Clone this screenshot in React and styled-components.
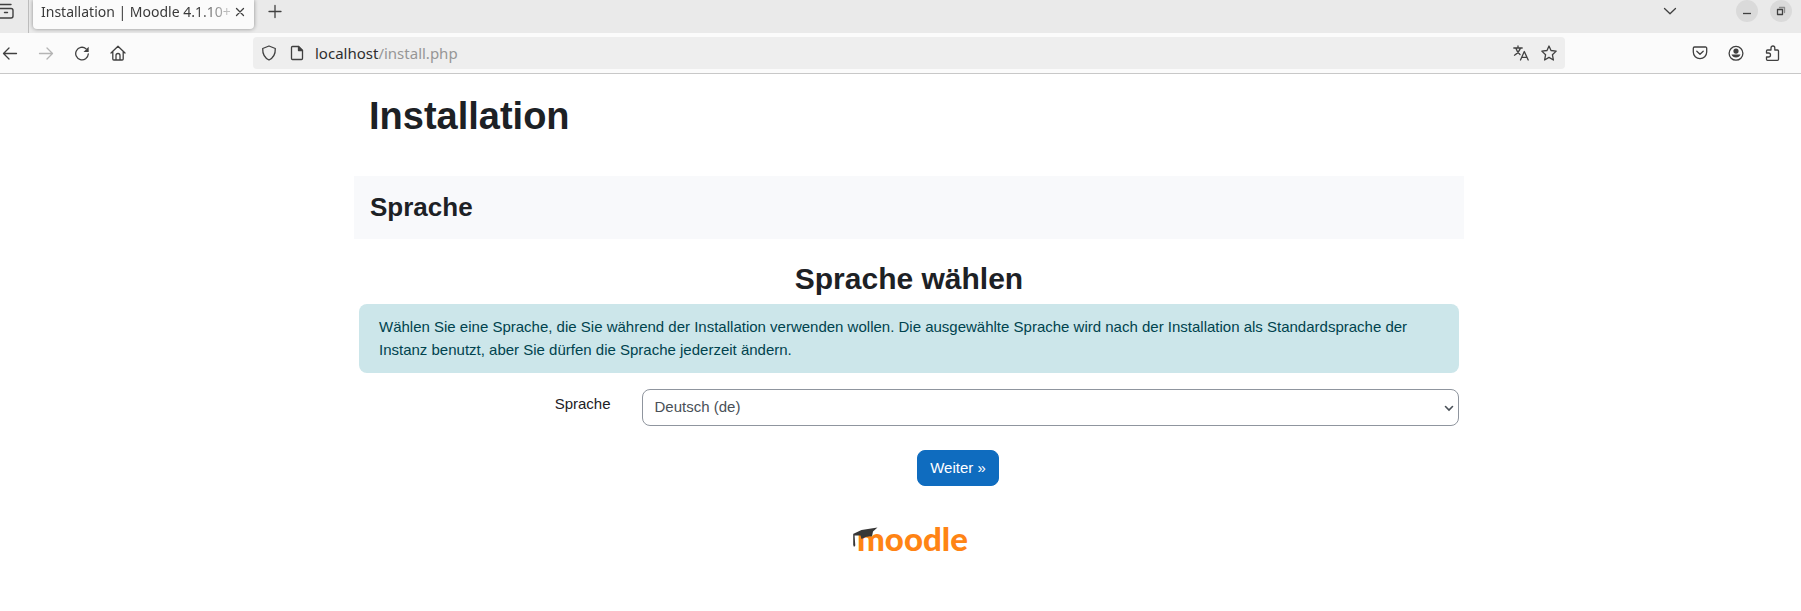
import React from "react";
import styled, { createGlobalStyle } from "styled-components";

const sans = '"Liberation Sans", Arial, sans-serif';
const chrome = '"Noto Sans", "Open Sans", sans-serif';

const GlobalStyle = createGlobalStyle`
  *, *::before, *::after { box-sizing: border-box; }
  body { margin: 0; background: #fff; color: #1d2125; font: 15px/23px ${sans}; overflow-x: hidden; }
  button, select { font: inherit; }
`;

const TabStrip = styled.div`
  display: flex;
  height: 33px;
  padding-right: 9px;
  background: #eaeaea;
  font-family: ${chrome};
`;

const StripStart = styled.div`
  display: flex;
  width: 29px;
  height: 33px;
  border-right: 1px solid #bdbdbd;
`;

const Tab = styled.div`
  display: flex;
  align-items: center;
  width: 221px;
  height: 29px;
  margin-left: 4px;
  padding: 0 7px 6px 8px;
  border-radius: 0 0 4px 4px;
  background: #fbfbfb;
  box-shadow: 0 0 4px rgba(0, 0, 0, 0.4);
`;

const TabTitle = styled.span`
  flex: 1;
  white-space: nowrap;
  font-size: 14px;
  color: #3a3a3a;
  mask-image: linear-gradient(to left, rgba(0, 0, 0, 0.3) 4px, #000 34px);
`;

const IconButton = styled.button`
  display: grid;
  place-items: center;
  flex: none;
  width: ${(p) => p.$size || 24}px;
  height: ${(p) => p.$size || 24}px;
  padding: 0;
  border: 0;
  border-radius: ${(p) => (p.$round ? "50%" : "4px")};
  background: ${(p) => (p.$round ? "#dadada" : "transparent")};
  color: ${(p) => (p.$faded ? "#b4b4b4" : "#404040")};
`;

const NewTab = styled.div`
  padding-left: 10px;
`;

const WindowControls = styled.div`
  display: flex;
  gap: 12px;
  margin-left: auto;
`;

const TabList = styled.div`
  padding-right: 43px;
`;

const Toolbar = styled.div`
  display: flex;
  align-items: center;
  height: 41px;
  padding: 0 17px 0 0;
  border-bottom: 1px solid #c8c8c8;
  background: #fbfbfb;
`;

const NavButtons = styled.div`
  display: flex;
  gap: 12px;
  width: 253px;
  flex: none;
  margin-left: -2px;
`;

const AddressBar = styled.div`
  display: flex;
  align-items: center;
  gap: 4px;
  flex: 1;
  height: 32px;
  margin-left: 2px;
  padding: 0 4px;
  border-radius: 4px;
  background: #eeeeee;
`;

const Address = styled.div`
  flex: 1;
  padding-left: 2px;
  font: 15px/20px ${chrome};
  color: #969696;
  b { font-weight: 400; color: #2e2e2e; }
`;

const Extensions = styled.div`
  display: flex;
  gap: 12px;
  padding-left: 123px;
`;

const Page = styled.div`
  padding-left: 17px;
`;

const Container = styled.div`
  max-width: 1110px;
  margin: 0 auto;
`;

const Title = styled.h1`
  margin: 0;
  padding: 20px 15px 38px;
  font-size: 38px;
  line-height: 44px;
`;

const Stage = styled.h2`
  margin: 0;
  padding: 15px 16px;
  background: #f8f9fb;
  font-size: 26px;
  line-height: 33px;
`;

const Main = styled.main`
  padding: 22px 5px 0;
`;

const Heading = styled.h2`
  margin: 0 0 7px;
  font-size: 30px;
  line-height: 36px;
  text-align: center;
`;

const Notice = styled.div`
  padding: 11px 20px 12px;
  border-radius: 8px;
  background: #cce6ea;
  color: #00434e;
`;

const Form = styled.form`
  display: flex;
  flex-direction: column;
`;

const Field = styled.div`
  display: grid;
  grid-template-columns: 4fr 13fr;
  gap: 31px;
  margin: 16px 0 24px;
  label { padding-top: 3px; text-align: right; }
`;

const SelectBox = styled.div`
  display: grid;
  align-items: center;
  > * { grid-area: 1 / 1; }
  svg { justify-self: end; margin-right: 4px; pointer-events: none; color: #495057; }
`;

const Select = styled.select`
  appearance: none;
  width: 100%;
  height: 37px;
  padding: 0 12px 2px;
  border: 1px solid #8f959e;
  border-radius: 8px;
  background: #fff;
  color: #495057;
`;

const Actions = styled.div`
  display: flex;
  justify-content: center;
  padding-left: 98px;
`;

const Submit = styled.button`
  height: 36px;
  padding: 0 12px 2px;
  border: 1px solid #0f6cbf;
  border-radius: 8px;
  background: #0f6cbf;
  color: #fff;
`;

const Footer = styled.footer`
  display: flex;
  justify-content: center;
  padding: 33px 0;
  a { display: block; height: 42px; }
`;

function Icon({ size = 16, children }) {
  return (
    <svg width={size} height={size} viewBox={`0 0 ${size} ${size}`} fill="none" stroke="currentColor" strokeWidth="1.3" strokeLinecap="round" strokeLinejoin="round" aria-hidden="true">
      {children}
    </svg>
  );
}

function MoodleLogo() {
  return (
    <svg width="120" height="42" viewBox="0 0 120 42" role="img" aria-label="moodle">
      <text x="8" y="32" fill="#ff8414" fontFamily="Lato, sans-serif" fontWeight="900" fontSize="33">moodle</text>
      <path d="M4 15L12.500 11 28.500 8.500 24 12.500 23 17.500Q18 16.500 12.500 20L11.500 16.500 5.500 16.500zM4.200 15.500H5.500L6.300 26.500 5 28 4.200 26z" fill="#373737" />
    </svg>
  );
}

export default function App() {
  return (
    <>
      <GlobalStyle />
      <header>
        <TabStrip>
          <StripStart>
            <IconButton aria-label="Firefox View" $size={22}>
              <svg width="22" height="22" viewBox="0 0 22 22" fill="none" stroke="currentColor" strokeWidth="1.4" strokeLinecap="round" aria-hidden="true">
                <path d="M0 8.500H11a2 2 0 0 1 2 2V16a2 2 0 0 1-2 2H0M0 4.500H11M4.500 12.500H7.500" />
              </svg>
            </IconButton>
          </StripStart>
          <Tab>
            <TabTitle>Installation | Moodle 4.1.10+</TabTitle>
            <IconButton aria-label="Tab schließen" $size={18}>
              <Icon><path d="M4.500 4.500l7 7M11.500 4.500l-7 7" /></Icon>
            </IconButton>
          </Tab>
          <NewTab>
            <IconButton aria-label="Neuer Tab" $size={22}>
              <Icon><path d="M8 2.500v12M2 8.500h12" /></Icon>
            </IconButton>
          </NewTab>
          <WindowControls>
            <TabList>
              <IconButton aria-label="Alle Tabs" $size={22}>
                <Icon><path d="M2.500 5.500L8 10.800l5.500-5.300" /></Icon>
              </IconButton>
            </TabList>
            <IconButton aria-label="Minimieren" $size={22} $round>
              <Icon><path d="M4 10.500h8" strokeLinecap="butt" /></Icon>
            </IconButton>
            <IconButton aria-label="Wiederherstellen" $size={22} $round>
              <Icon><path d="M4.500 6.500h5v5h-5z" /><path d="M6.500 4.500h5v5" opacity="0.500" /></Icon>
            </IconButton>
          </WindowControls>
        </TabStrip>
        <Toolbar>
          <NavButtons>
            <IconButton aria-label="Zurück"><Icon><path d="M14.500 8.500H1.500M7 3L1.500 8.500 7 14" /></Icon></IconButton>
            <IconButton aria-label="Vor" $faded><Icon><path d="M1.500 8.500h13M9 3L14.500 8.500 9 14" /></Icon></IconButton>
            <IconButton aria-label="Neu laden">
              <Icon><path d="M14.300 9A6.300 6.300 0 1 1 12 3.700" /><path d="M14.700 1.800V7H9.500z" fill="currentColor" stroke="none" /></Icon>
            </IconButton>
            <IconButton aria-label="Startseite">
              <Icon><path d="M1 8L8 1.200 15 8M2.800 6.500V14a1 1 0 0 0 1 1H12.200a1 1 0 0 0 1-1V6.500M6 15V10.500a2 2 0 0 1 4 0V15" /></Icon>
            </IconButton>
          </NavButtons>
          <AddressBar>
            <IconButton aria-label="Schutz">
              <Icon><path d="M8 1L14.300 3.500C14.500 9 12.500 12.800 8 15 3.500 12.800 1.500 9 1.700 3.500z" /></Icon>
            </IconButton>
            <IconButton aria-label="Seiteninformationen">
              <Icon><path d="M3.500 1.500H9.500L13.500 5.500V13.500a1 1 0 0 1-1 1H3.500a1 1 0 0 1-1-1V2.500a1 1 0 0 1 1-1z" /><path d="M9.500 1.500V5.500h4z" fill="currentColor" /></Icon>
            </IconButton>
            <Address><b>localhost</b>/install.php</Address>
            <IconButton aria-label="Seite übersetzen">
              <Icon><path d="M.8 3H9.200M5 1V3M7.500 3Q6 7.500 1.500 10.200M2.800 3Q4 7 7 9.500M7.500 15L11.300 6.500 15.200 15M8.800 12.300h5" /></Icon>
            </IconButton>
            <IconButton aria-label="Lesezeichen hinzufügen">
              <Icon><path d="M8 1L10 5.500 15.200 6.100 11.400 9.700 12.400 15 8 12.400 3.600 15 4.600 9.700 .8 6.100 6 5.500z" /></Icon>
            </IconButton>
          </AddressBar>
          <Extensions>
            <IconButton aria-label="Pocket">
              <Icon><path d="M2.500 2H13.500a1.200 1.200 0 0 1 1.200 1.200V7a6.700 6.700 0 0 1-13.400 0V3.200A1.200 1.200 0 0 1 2.500 2zM4.800 6.200L8 9.200l3.200-3" /></Icon>
            </IconButton>
            <IconButton aria-label="Konto">
              <Icon><circle cx="8" cy="8.300" r="6.900" /><g fill="currentColor" stroke="none"><circle cx="8" cy="6.100" r="2.600" /><path d="M3.500 9.600h9a4.800 4.500 0 0 1-9 0z" /></g></Icon>
            </IconButton>
            <IconButton aria-label="Erweiterungen">
              <Icon><path d="M2.500 8V6a1 1 0 0 1 1-1H7V2.900a1.900 1.900 0 0 1 3.800 0V5H13.500a1 1 0 0 1 1 1V14.300a1 1 0 0 1-1 1H3.500a1 1 0 0 1-1-1V12H4.500a2 2 0 0 0 0-4z" /></Icon>
            </IconButton>
          </Extensions>
        </Toolbar>
      </header>
      <Page>
        <Container>
          <Title>Installation</Title>
          <Stage>Sprache</Stage>
          <Main>
            <Heading>Sprache wählen</Heading>
            <Notice>
              Wählen Sie eine Sprache, die Sie während der Installation verwenden wollen. Die ausgewählte Sprache wird nach der Installation als Standardsprache der Instanz benutzt, aber Sie dürfen die Sprache jederzeit ändern.
            </Notice>
            <Form onSubmit={(e) => e.preventDefault()}>
              <Field>
                <label htmlFor="language">Sprache</label>
                <SelectBox>
                  <Select id="language" defaultValue="de">
                    <option value="de">Deutsch (de)</option>
                  </Select>
                  <svg width="12" height="12" viewBox="0 0 12 12" fill="none" stroke="currentColor" strokeWidth="1.6" strokeLinecap="round" aria-hidden="true">
                    <path d="M2.500 4.500L6 8l3.500-3.500" />
                  </svg>
                </SelectBox>
              </Field>
              <Actions><Submit type="submit">Weiter »</Submit></Actions>
            </Form>
            <Footer><a href="https://moodle.org/"><MoodleLogo /></a></Footer>
          </Main>
        </Container>
      </Page>
    </>
  );
}
